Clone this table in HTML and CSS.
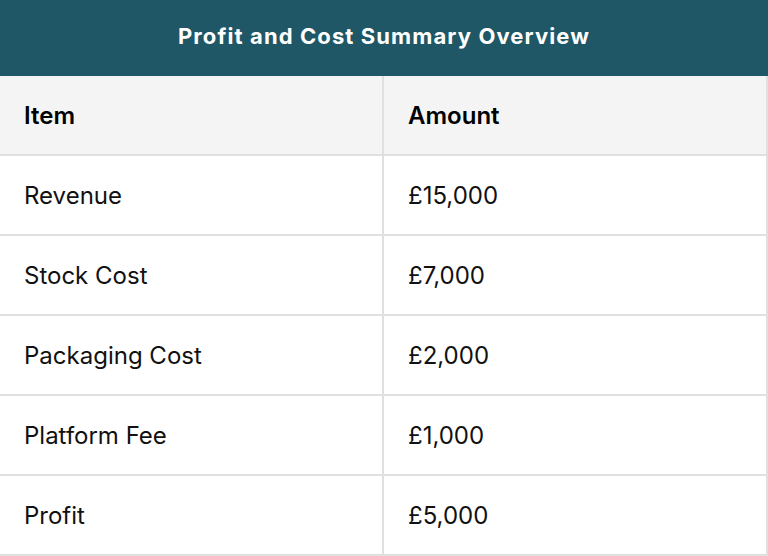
FILE: index.html
```html
<!DOCTYPE html>
<html>
<head>
<meta charset="utf-8">
<link rel="stylesheet" href="styles.css">
</head>
<body>
<div class="summary">
  <div class="title">Profit and Cost Summary Overview</div>
  <div class="grid">
    <div class="cell head">Item</div>
    <div class="cell head">Amount</div>
    <div class="cell">Revenue</div>
    <div class="cell">£15,000</div>
    <div class="cell">Stock Cost</div>
    <div class="cell">£7,000</div>
    <div class="cell">Packaging Cost</div>
    <div class="cell">£2,000</div>
    <div class="cell">Platform Fee</div>
    <div class="cell">£1,000</div>
    <div class="cell">Profit</div>
    <div class="cell">£5,000</div>
  </div>
</div>
</body>
</html>
```
FILE: styles.css
```css
html, body {
  margin: 0;
  padding: 0;
  background: #ffffff;
}
.summary {
  width: 768px;
  font-family: Inter, "Liberation Sans", sans-serif;
}
.title {
  height: 76px;
  background: #1f5766;
  color: #ffffff;
  display: flex;
  align-items: center;
  justify-content: center;
  font-weight: 700;
  font-size: 22px;
  letter-spacing: 1.1px;
  padding-bottom: 4px;
  box-sizing: border-box;
}
.grid {
  display: grid;
  grid-template-columns: 384px 384px;
}
.cell {
  height: 80px;
  box-sizing: border-box;
  border-right: 2px solid #e0e0e0;
  border-bottom: 2px solid #e0e0e0;
  display: flex;
  align-items: center;
  padding-left: 24px;
  font-size: 24px;
  color: #111111;
}
.cell.head {
  background: #f4f4f4;
  font-weight: 600;
  color: #000000;
}
```
